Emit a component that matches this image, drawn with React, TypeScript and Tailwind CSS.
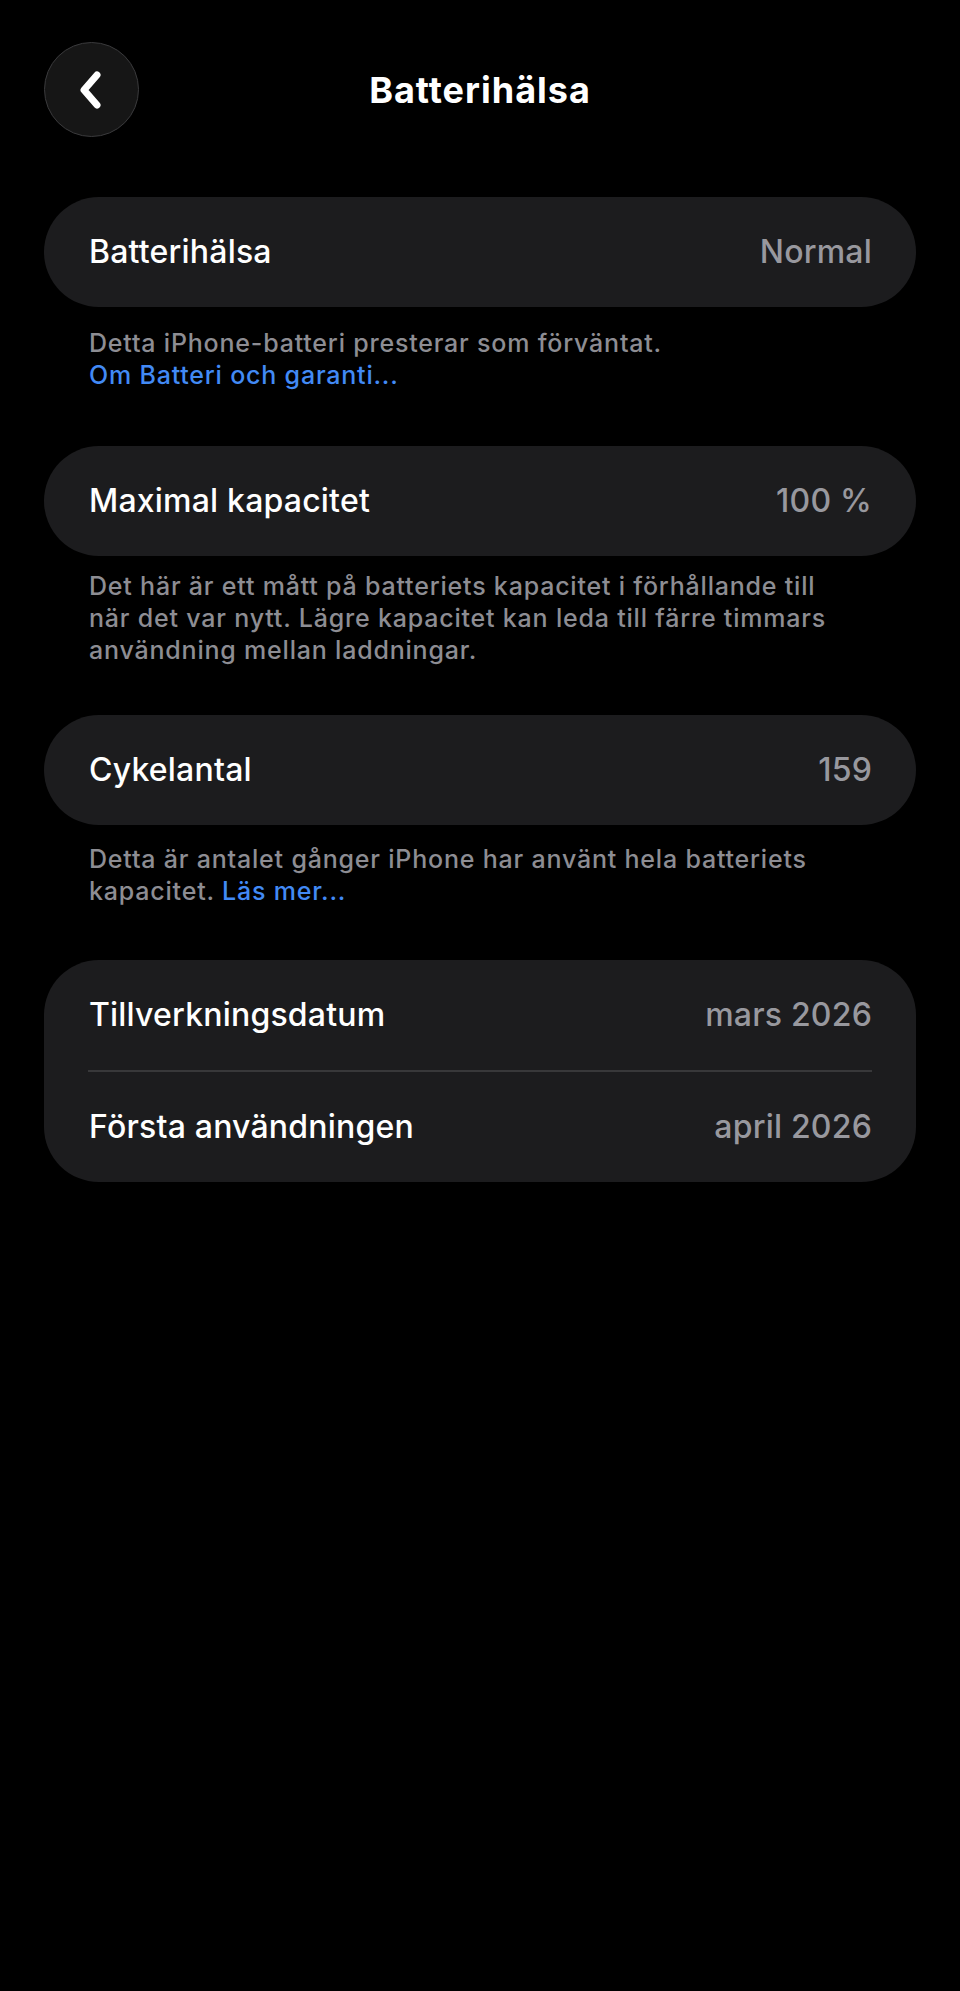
const font = { fontFamily: "Inter, 'Noto Sans', sans-serif" };

function Row({ label, value }: { label: string; value: string }) {
  return (
    <div className="flex h-[110px] items-center justify-between pl-[45px] pr-[44px]">
      <span className="text-[32px] font-medium tracking-[0.2px] text-white">{label}</span>
      <span className="text-[32px] font-medium tracking-[0.2px] text-[#98989e]">{value}</span>
    </div>
  );
}

export default function App() {
  return (
    <div className="min-h-[1991px] w-full bg-black text-white" style={font}>
      <div className="px-[44px] pt-[42px]">
        {/* Header */}
        <div className="grid grid-cols-[95px_1fr_95px] items-center">
          <button className="flex h-[95px] w-[95px] items-center justify-center rounded-full border border-[#3a3a3c] bg-[#161616]">
            <svg width="32" height="40" viewBox="0 0 32 40" fill="none">
              <path d="M21 5L8 20L21 35" stroke="white" strokeWidth="7" strokeLinecap="round" strokeLinejoin="round" />
            </svg>
          </button>
          <h1 className="text-center text-[36px] font-bold tracking-[1px]">Batterihälsa</h1>
          <div />
        </div>

        <div className="mt-[60px] rounded-[55px] bg-[#1c1c1e]">
          <Row label="Batterihälsa" value="Normal" />
        </div>
        <p className="mt-[20px] pl-[45px] text-[25px] font-medium leading-[32px] tracking-[0.8px] text-[#8d8d93]">
          Detta iPhone-batteri presterar som förväntat.
          <br />
          <span className="text-[#428af5]">Om Batteri och garanti...</span>
        </p>

        <div className="mt-[55px] rounded-[55px] bg-[#1c1c1e]">
          <Row label="Maximal kapacitet" value="100 %" />
        </div>
        <p className="mt-[14px] pl-[45px] text-[25px] font-medium leading-[32px] tracking-[0.8px] text-[#8d8d93]">
          Det här är ett mått på batteriets kapacitet i förhållande till
          <br />
          när det var nytt. Lägre kapacitet kan leda till färre timmars
          <br />
          användning mellan laddningar.
        </p>

        <div className="mt-[49px] rounded-[55px] bg-[#1c1c1e]">
          <Row label="Cykelantal" value="159" />
        </div>
        <p className="mt-[18px] pl-[45px] text-[25px] font-medium leading-[32px] tracking-[0.8px] text-[#8d8d93]">
          Detta är antalet gånger iPhone har använt hela batteriets
          <br />
          kapacitet. <span className="text-[#428af5]">Läs mer...</span>
        </p>

        <div className="mt-[53px] rounded-[55px] bg-[#1c1c1e]">
          <Row label="Tillverkningsdatum" value="mars 2026" />
          <div className="mx-[44px] h-[2px] bg-[#38383a]" />
          <Row label="Första användningen" value="april 2026" />
        </div>
      </div>
    </div>
  );
}
